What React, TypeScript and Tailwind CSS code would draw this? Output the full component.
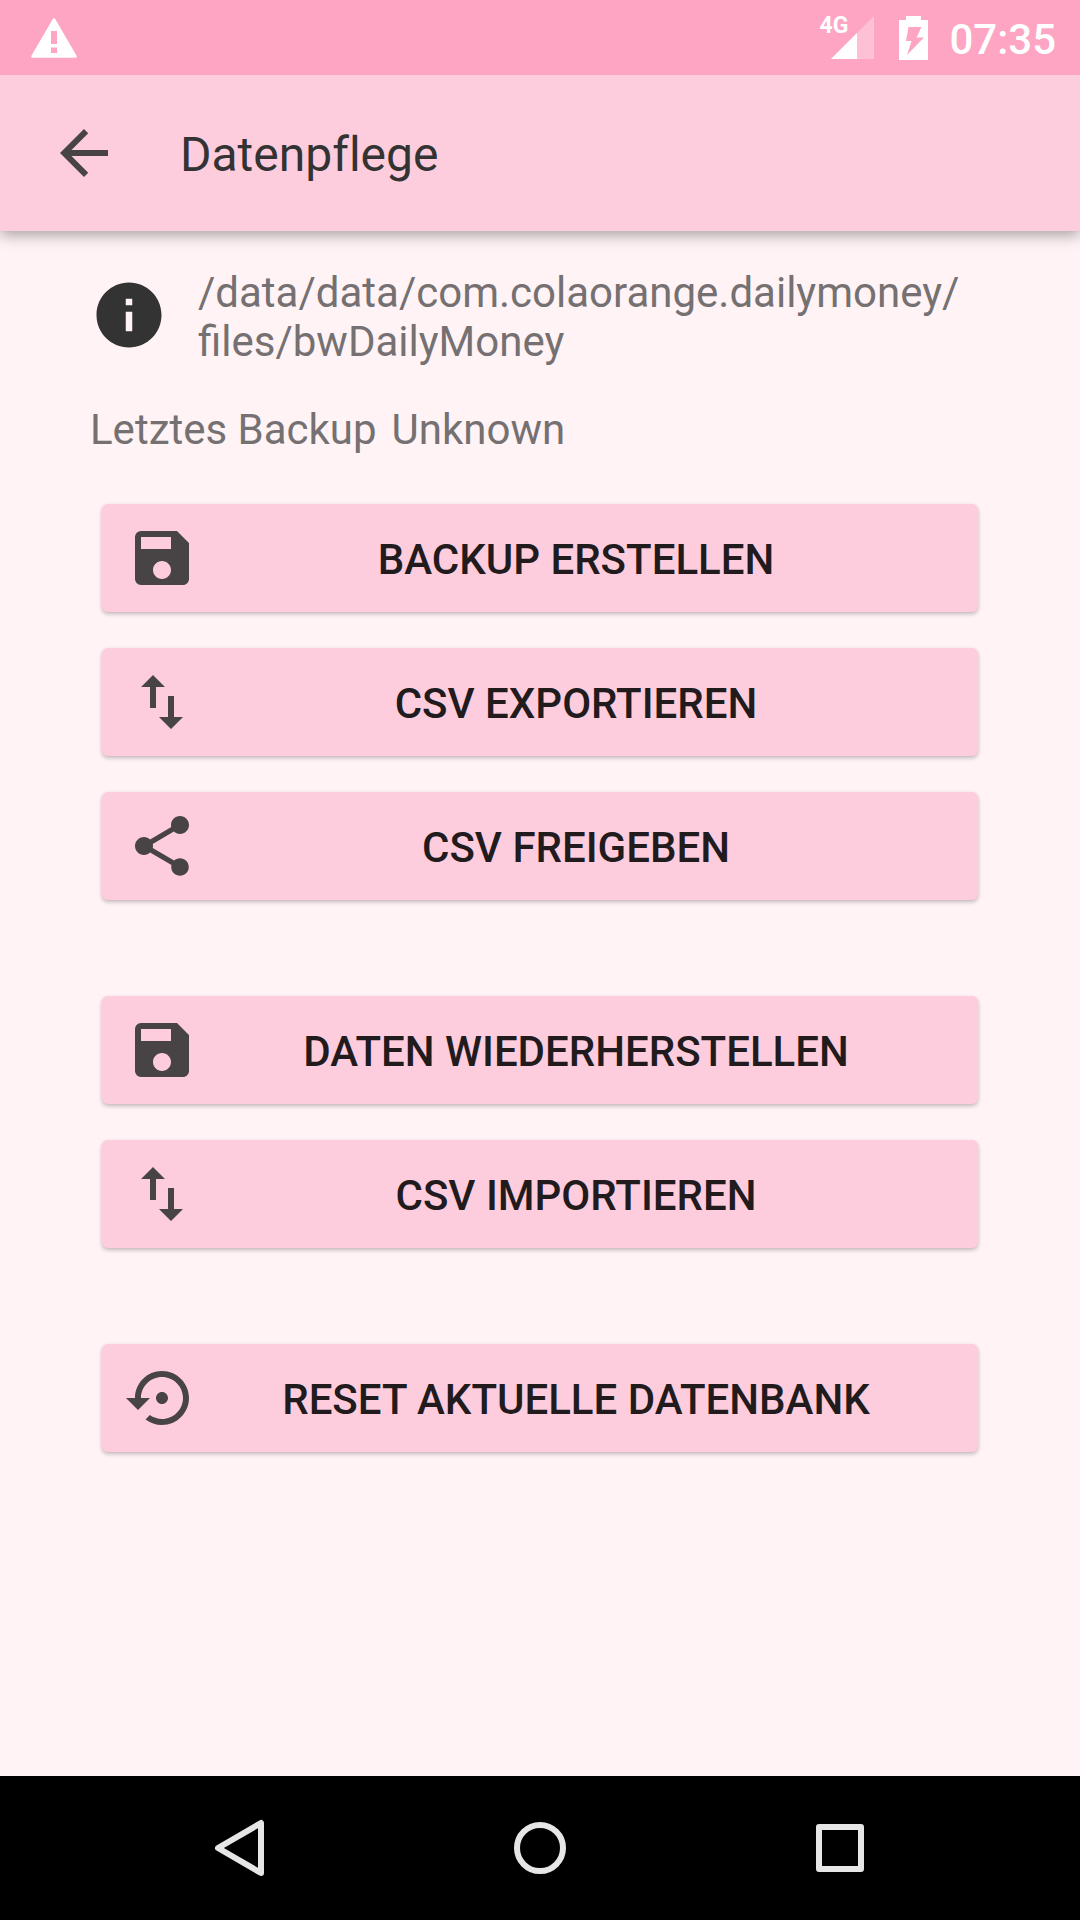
import React from "react";
import { MdArrowBack, MdInfo, MdSave, MdShare } from "react-icons/md";

type IconProps = { className?: string };

function SwapIcon({ className }: IconProps) {
  return (
    <svg viewBox="0 0 24 24" fill="currentColor" className={className} aria-hidden="true">
      <path d="M16 17.01V10h-2v7.01h-3L15 21l4-3.99h-3zM9 3L5 6.99h3V14h2V6.99h3L9 3z" />
    </svg>
  );
}

function ResetIcon({ className }: IconProps) {
  return (
    <svg viewBox="0 0 24 24" fill="currentColor" className={className} aria-hidden="true">
      <path d="M14 12c0-1.100-.9-2-2-2s-2 .9-2 2 .9 2 2 2 2-.9 2-2zm-2-9c-4.970 0-9 4.030-9 9H0l4 4 4-4H5c0-3.870 3.130-7 7-7s7 3.130 7 7-3.130 7-7 7c-1.510 0-2.910-.49-4.060-1.300l-1.420 1.440C8.040 20.300 9.940 21 12 21c4.970 0 9-4.030 9-9s-4.030-9-9-9z" />
    </svg>
  );
}

function WarningIcon() {
  return (
    <svg viewBox="0 0 46 40" className="h-10 w-[46px]" aria-hidden="true">
      <path
        d="M23 1.500L44.500 38.500H1.500Z"
        fill="#fff"
        stroke="#fff"
        strokeWidth="2.500"
        strokeLinejoin="round"
      />
      <path d="M20 13h6v13h-6zM20 29.500h6v5.500h-6z" fill="#fda5c2" />
    </svg>
  );
}

function SignalIcon() {
  return (
    <svg viewBox="0 0 43 43" className="size-[43px]" aria-hidden="true">
      <path d="M43 0V43H0Z" fill="#fff" fillOpacity="0.3" />
      <path d="M26 17V43H0Z" fill="#fff" />
    </svg>
  );
}

function BatteryIcon() {
  return (
    <svg viewBox="0 0 29 44" className="h-[44px] w-[29px]" aria-hidden="true">
      <path
        fill="#fff"
        fillRule="evenodd"
        d="M7 0H22V4H29V44H0V4H7ZM9.500 11L7 25H12.500L8 39L25 21.500H17.500L22.500 11Z"
      />
    </svg>
  );
}

const groups = [
  [
    { label: "Backup erstellen", Icon: MdSave },
    { label: "CSV exportieren", Icon: SwapIcon },
    { label: "CSV freigeben", Icon: MdShare },
  ],
  [
    { label: "Daten wiederherstellen", Icon: MdSave },
    { label: "CSV importieren", Icon: SwapIcon },
  ],
  [{ label: "Reset aktuelle Datenbank", Icon: ResetIcon }],
];

export default function App() {
  return (
    <div className="flex min-h-screen flex-col bg-[#fff3f5] font-['Roboto',sans-serif] text-[42px] leading-[49px]">
      <div className="relative z-10 flex h-[75px] items-center justify-between bg-[#fda5c2] pr-6 pl-[31px] text-white">
        <WarningIcon />
        <div className="flex items-center">
          <div className="relative pl-3">
            <span className="absolute top-0 left-0 text-[23px] leading-5 font-bold">4G</span>
            <SignalIcon />
          </div>
          <div className="mr-[21px] ml-[25px]">
            <BatteryIcon />
          </div>
          <span className="pt-1 font-medium">07:35</span>
        </div>
      </div>

      <header className="relative flex h-[156px] items-center bg-[#fecddd] px-12 shadow-[0_4px_14px_rgba(0,0,0,0.35)]">
        <button type="button" aria-label="Zurück" className="text-[#484344]">
          <MdArrowBack className="size-[72px]" />
        </button>
        <h1 className="ml-[60px] pt-1 text-[48px] leading-[56px] text-[#333] [font-variant-ligatures:none]">
          Datenpflege
        </h1>
      </header>

      <main className="flex-1 px-[90px] pt-[37px] pb-12">
        <div className="flex items-start gap-[30px]">
          <MdInfo className="mt-2 size-[78px] shrink-0 text-[#333]" />
          <p className="min-w-0 flex-1 text-[#757071]">
            /data/data/com.colaorange.dailymoney/
            <wbr />
            files/bwDailyMoney
          </p>
        </div>
        <p className="mt-[39px] flex gap-[15px] text-[#757071]">
          <span>Letztes Backup</span>
          <span>Unknown</span>
        </p>

        <div className="mx-3 mt-[50px] flex flex-col gap-24">
          {groups.map((group, i) => (
            <div key={i} className="flex flex-col gap-9">
              {group.map(({ label, Icon }) => (
                <button
                  key={label}
                  type="button"
                  className="flex h-[108px] items-center rounded-md bg-[#fecddd] px-6 shadow-[0_2px_4px_rgba(0,0,0,0.25)]"
                >
                  <Icon className="size-[72px] shrink-0 text-[#484344]" />
                  <span className="flex-1 pt-0.5 text-center font-medium text-[#211b1d] uppercase">{label}</span>
                </button>
              ))}
            </div>
          ))}
        </div>
      </main>

      <nav className="flex h-36 items-center justify-center gap-[228px] bg-black text-[#e6e6e6]">
        <button type="button" aria-label="Zurück">
          <svg viewBox="0 0 72 72" className="size-[72px]" fill="none" stroke="currentColor" strokeWidth="6" strokeLinejoin="round" aria-hidden="true">
            <path d="M57 11V61L14 36Z" />
          </svg>
        </button>
        <button type="button" aria-label="Startseite">
          <svg viewBox="0 0 72 72" className="size-[72px]" fill="none" stroke="currentColor" strokeWidth="6" aria-hidden="true">
            <circle cx="36" cy="36" r="23" />
          </svg>
        </button>
        <button type="button" aria-label="Übersicht">
          <svg viewBox="0 0 72 72" className="size-[72px]" fill="none" stroke="currentColor" strokeWidth="6" strokeLinejoin="round" aria-hidden="true">
            <rect x="15" y="15" width="42" height="42" />
          </svg>
        </button>
      </nav>
    </div>
  );
}
